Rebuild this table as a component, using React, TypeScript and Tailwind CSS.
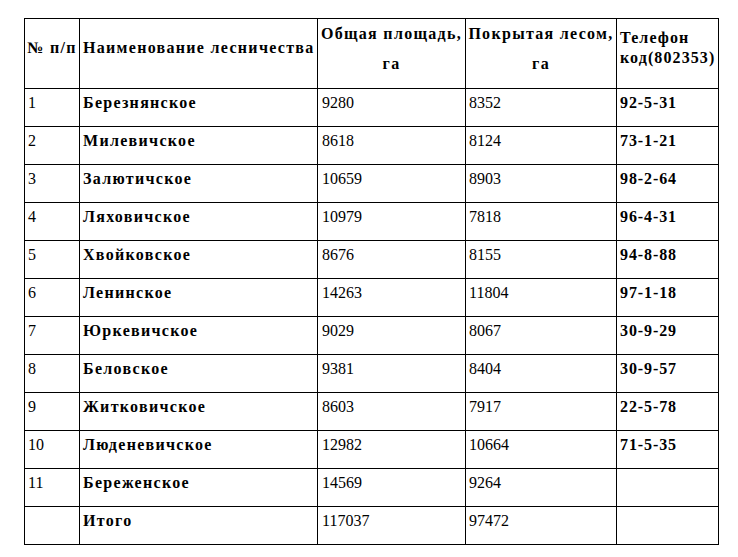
import React from "react";

const rows: [string, string, string, string, string][] = [
  ["1", "Березнянское", "9280", "8352", "92-5-31"],
  ["2", "Милевичское", "8618", "8124", "73-1-21"],
  ["3", "Залютичское", "10659", "8903", "98-2-64"],
  ["4", "Ляховичское", "10979", "7818", "96-4-31"],
  ["5", "Хвойковское", "8676", "8155", "94-8-88"],
  ["6", "Ленинское", "14263", "11804", "97-1-18"],
  ["7", "Юркевичское", "9029", "8067", "30-9-29"],
  ["8", "Беловское", "9381", "8404", "30-9-57"],
  ["9", "Житковичское", "8603", "7917", "22-5-78"],
  ["10", "Люденевичское", "12982", "10664", "71-5-35"],
  ["11", "Береженское", "14569", "9264", ""],
  ["", "Итого", "117037", "97472", ""],
];

export default function App() {
  return (
    <div className="w-[738px] h-[557px] bg-white text-black pt-[18px] pl-[24px] font-['Liberation_Serif','Times_New_Roman',serif]">
      <table className="w-[694px] border-collapse table-fixed text-[16px] leading-[19px]">
        <colgroup>
          <col className="w-[55px]" />
          <col className="w-[238px]" />
          <col className="w-[148px]" />
          <col className="w-[151px]" />
          <col className="w-[102px]" />
        </colgroup>
        <thead>
          <tr className="h-[70px]">
            <th className="border border-black pl-[2px] pr-0 pt-[19px] text-left align-top font-bold tracking-[1.4px] whitespace-nowrap">№ п/п</th>
            <th className="border border-black pl-[3px] pt-[19px] text-left align-top font-bold tracking-[1.3px] whitespace-nowrap">Наименование лесничества</th>
            <th className="border border-black px-0 pt-[5px] text-center align-top font-bold tracking-[1.3px] whitespace-nowrap">
              <div>Общая площадь,</div>
              <div className="mt-[11px]">га</div>
            </th>
            <th className="border border-black px-0 pt-[5px] text-center align-top font-bold tracking-[1.3px] whitespace-nowrap">
              <div>Покрытая лесом,</div>
              <div className="mt-[11px]">га</div>
            </th>
            <th className="border border-black pl-[3px] pr-0 pt-[9px] text-left align-top font-bold tracking-[1.1px] whitespace-nowrap leading-[20px]">
              <div>Телефон</div>
              <div>код(802353)</div>
            </th>
          </tr>
        </thead>
        <tbody>
          {rows.map((r, i) => (
            <tr key={i} className="h-[38px]">
              <td className="border border-black pl-[3px] pt-[4px] align-top">{r[0]}</td>
              <td className="border border-black pl-[3px] pt-[4px] align-top font-bold tracking-[1.3px]">{r[1]}</td>
              <td className="border border-black pl-[4px] pt-[4px] align-top">{r[2]}</td>
              <td className="border border-black pl-[3px] pt-[4px] align-top">{r[3]}</td>
              <td className="border border-black pl-[3px] pt-[4px] align-top font-bold tracking-[0.9px]">{r[4]}</td>
            </tr>
          ))}
        </tbody>
      </table>
    </div>
  );
}
